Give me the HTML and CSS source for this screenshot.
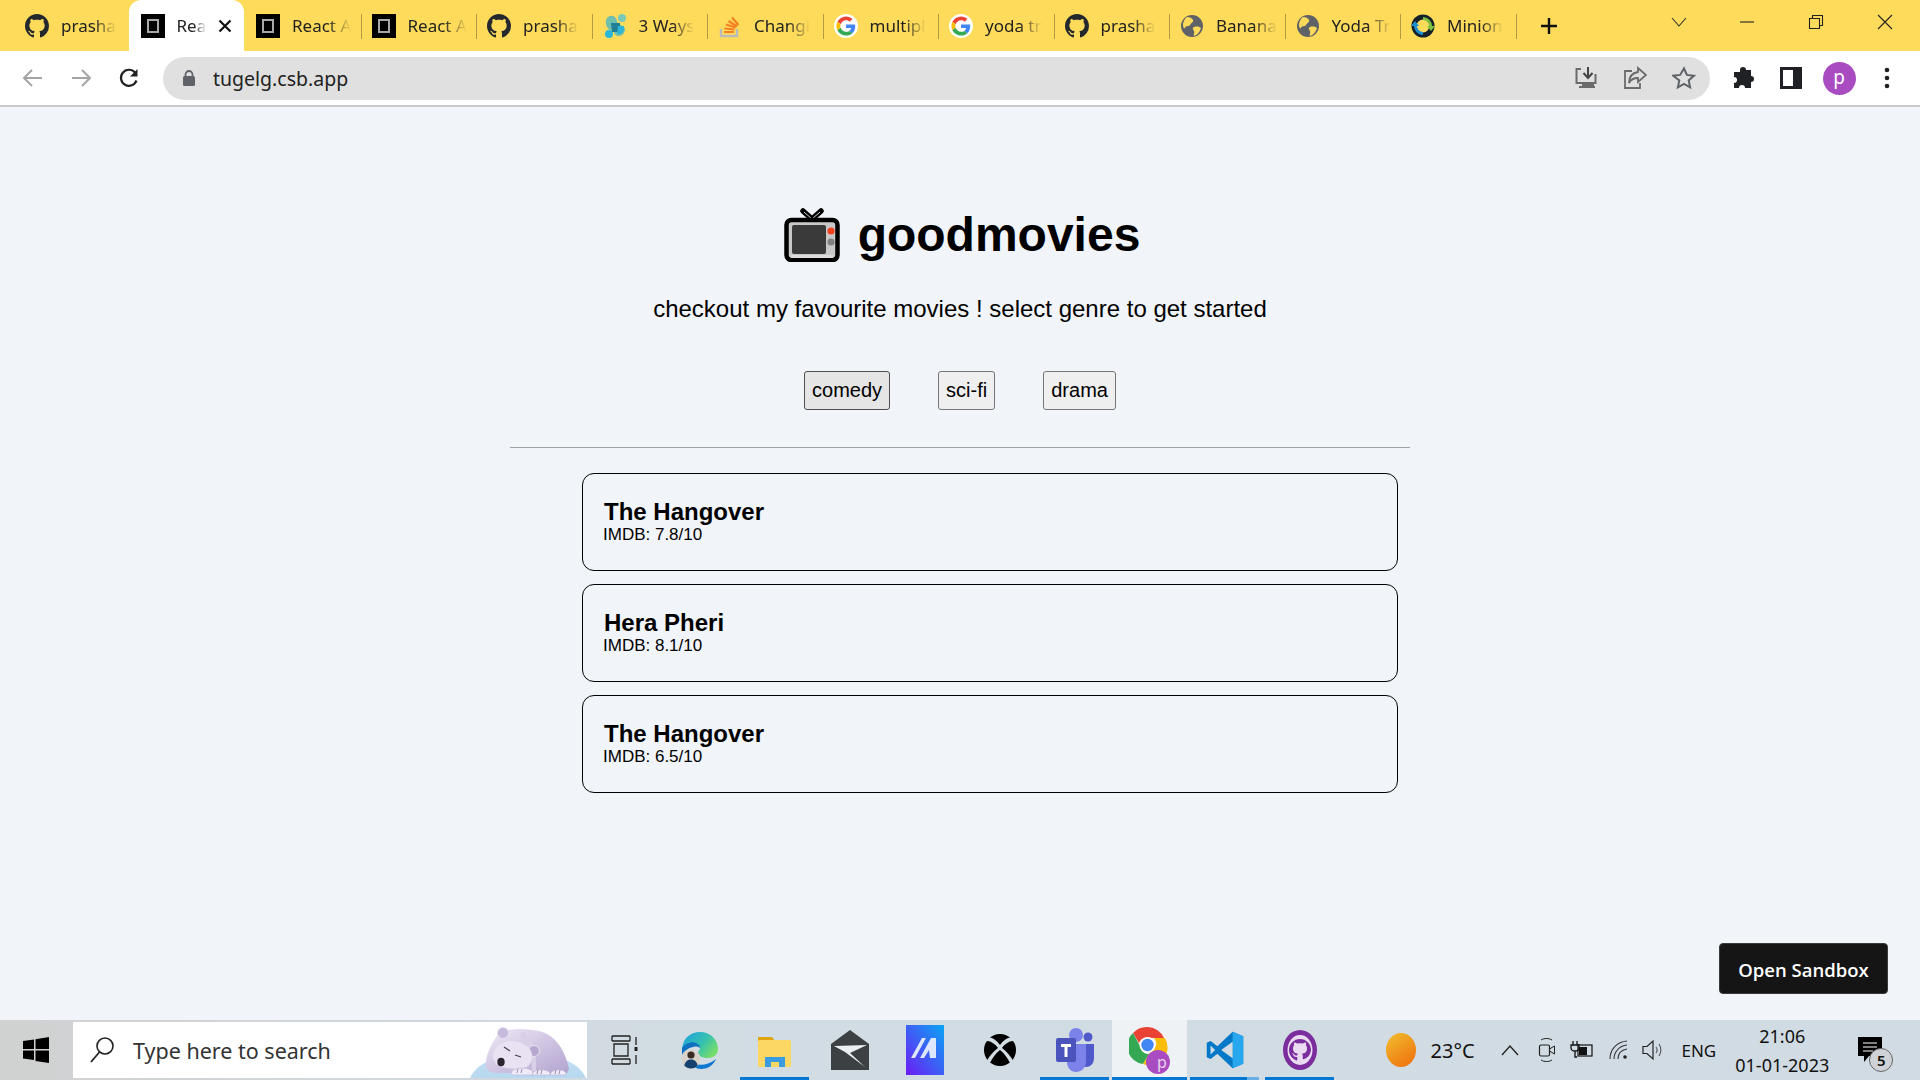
FILE: index.html
```html
<!DOCTYPE html>
<html lang="en">
<head>
    <meta charset="UTF-8">
    <title>goodmovies</title>
    <link rel="stylesheet" href="styles.css">
</head>
<body>
    <svg class="sprite" width="0" height="0">
        <symbol id="i-github" viewBox="0 0 16 16"><path d="M8 0C3.58 0 0 3.58 0 8c0 3.54 2.29 6.53 5.47 7.59.4.07.55-.17.55-.38 0-.19-.01-.82-.01-1.49-2.01.37-2.53-.49-2.69-.94-.09-.23-.48-.94-.82-1.13-.28-.15-.68-.52-.01-.53.63-.01 1.08.58 1.23.82.72 1.21 1.87.87 2.33.66.07-.52.28-.87.51-1.07-1.78-.2-3.64-.89-3.64-3.95 0-.87.31-1.59.82-2.15-.08-.2-.36-1.02.08-2.12 0 0 .67-.21 2.2.82.64-.18 1.32-.27 2-.27.68 0 1.36.09 2 .27 1.53-1.04 2.2-.82 2.2-.82.44 1.1.16 1.92.08 2.12.51.56.82 1.27.82 2.15 0 3.07-1.87 3.75-3.65 3.95.29.25.54.73.54 1.48 0 1.07-.01 1.93-.01 2.2 0 .21.15.46.55.38A8.013 8.013 0 0016 8c0-4.42-3.58-8-8-8z" fill="#24292e"/></symbol>
        <symbol id="i-box" viewBox="0 0 24 24"><rect width="24" height="24" fill="#000"/><rect x="7" y="6" width="10" height="12" fill="none" stroke="#a8a8a8" stroke-width="2"/></symbol>
        <symbol id="i-google" viewBox="-6 -6 60 60"><circle cx="24" cy="24" r="30" fill="#fff"/><path fill="#EA4335" d="M24 9.5c3.54 0 6.71 1.22 9.21 3.6l6.85-6.85C35.9 2.38 30.47 0 24 0 14.62 0 6.51 5.38 2.56 13.22l7.98 6.19C12.43 13.72 17.74 9.5 24 9.5z"/><path fill="#4285F4" d="M46.98 24.55c0-1.57-.15-3.09-.38-4.55H24v9.02h12.94c-.58 2.96-2.26 5.48-4.78 7.18l7.73 6c4.51-4.18 7.09-10.36 7.09-17.65z"/><path fill="#FBBC05" d="M10.53 28.59c-.48-1.45-.76-2.99-.76-4.59s.27-3.14.76-4.59l-7.98-6.19C.92 16.46 0 20.12 0 24c0 3.88.92 7.54 2.56 10.78l7.97-6.19z"/><path fill="#34A853" d="M24 48c6.48 0 11.93-2.13 15.89-5.81l-7.73-6c-2.15 1.45-4.92 2.3-8.16 2.3-6.26 0-11.57-4.22-13.47-9.91l-7.98 6.19C6.51 42.62 14.62 48 24 48z"/></symbol>
        <symbol id="i-globe" viewBox="0 0 24 24"><circle cx="12" cy="12" r="11" fill="#5f6368"/><path d="M7 3c3 0 5 1 6 3s-2 3-3 5-4 0-5 3c-1 1-2-1-2-3 0-3 2-7 4-8zM14 13c3-1 6 0 7 1-1 4-4 7-7 8-1-2 1-3 0-5s-2-3 0-4z" fill="#fdda59"/></symbol>
    </svg>

    <div class="tabbar">
        <div class="tabs">
            <div class="tab"><svg class="favicon"><use href="#i-github"/></svg><span class="tab-title">prasha</span></div>
            <div class="tab tab-active"><svg class="favicon"><use href="#i-box"/></svg><span class="tab-title">Rea</span><svg class="tab-close" width="14" height="14" viewBox="0 0 14 14"><path d="M1.500 1.500l11 11M12.500 1.500l-11 11" stroke="#111" stroke-width="2.200"/></svg></div>
            <div class="tab"><svg class="favicon"><use href="#i-box"/></svg><span class="tab-title">React A</span></div>
            <div class="tab"><svg class="favicon"><use href="#i-box"/></svg><span class="tab-title">React A</span></div>
            <div class="tab"><svg class="favicon"><use href="#i-github"/></svg><span class="tab-title">prasha</span></div>
            <div class="tab">
                <svg class="favicon" viewBox="0 0 24 24"><circle cx="6" cy="20" r="4" fill="#29b6d8"/><circle cx="19" cy="4" r="4" fill="#7cc9bb"/><path d="M4 4c4-4 9-2 10 3s4 3 7 6-1 10-6 9-3-6-7-6-7-8-4-12z" fill="#6fbfae"/><path d="M8 9h9v9H9z" fill="#1f7f96"/><path d="M15 12h6c1 5-3 9-7 8z" fill="#2bb5d6"/></svg><span class="tab-title">3 Ways</span>
            </div>
            <div class="tab">
                <svg class="favicon" viewBox="0 0 24 24"><path d="M3 15v7h16v-7" fill="none" stroke="#bcbbbb" stroke-width="2.4"/><path d="M6 18h10M6.500 14.500l10 1M8 10.500l9.500 3M10.500 7l8.500 5.500M14 3.500l6.500 7.500" stroke="#f48024" stroke-width="2.2" fill="none"/></svg><span class="tab-title">Changi</span>
            </div>
            <div class="tab"><svg class="favicon"><use href="#i-google"/></svg><span class="tab-title">multipl</span></div>
            <div class="tab"><svg class="favicon"><use href="#i-google"/></svg><span class="tab-title">yoda tr</span></div>
            <div class="tab"><svg class="favicon"><use href="#i-github"/></svg><span class="tab-title">prasha</span></div>
            <div class="tab"><svg class="favicon"><use href="#i-globe"/></svg><span class="tab-title">Banana</span></div>
            <div class="tab"><svg class="favicon"><use href="#i-globe"/></svg><span class="tab-title">Yoda Tr</span></div>
            <div class="tab">
                <svg class="favicon" viewBox="0 0 24 24"><circle cx="12" cy="12" r="9" fill="none" stroke="#14202a" stroke-width="5"/><path d="M12 3a9 9 0 0 1 9 9h3l-4 5-4-5h2a6 6 0 0 0-6-6z" fill="#7cc142"/><path d="M12 21a9 9 0 0 1-9-9H0l4-5 4 5H6a6 6 0 0 0 6 6z" fill="#1c8fd0"/></svg><span class="tab-title">Minion</span>
            </div>
        </div>
        <svg class="new-tab" width="22" height="22" viewBox="0 0 22 22"><path d="M11 3v16M3 11h16" stroke="#111" stroke-width="2.4"/></svg>
        <svg class="tab-search" width="18" height="12" viewBox="0 0 18 12"><path d="M2 2l7 8 7-8" fill="none" stroke="#333" stroke-width="1.1"/></svg>
        <div class="win-btn"><svg width="16" height="16" viewBox="0 0 16 16"><path d="M1 8h14" stroke="#222" stroke-width="1.1"/></svg></div>
        <div class="win-btn"><svg width="16" height="16" viewBox="0 0 16 16"><path d="M1.500 4.500h10v10h-10zM4.500 4.500v-3h10v10h-3" fill="none" stroke="#222" stroke-width="1.1"/></svg></div>
        <div class="win-btn"><svg width="18" height="18" viewBox="0 0 18 18"><path d="M2 2l14 14M16 2L2 16" stroke="#222" stroke-width="1.1"/></svg></div>
    </div>

    <div class="toolbar">
        <div class="nav-btn"><svg width="22" height="22" viewBox="0 0 22 22"><path d="M20 11H3M10 3l-8 8 8 8" fill="none" stroke="#a4a4a4" stroke-width="2"/></svg></div>
        <div class="nav-btn"><svg width="22" height="22" viewBox="0 0 22 22"><path d="M2 11h17M12 3l8 8-8 8" fill="none" stroke="#a4a4a4" stroke-width="2"/></svg></div>
        <div class="nav-btn"><svg width="22" height="22" viewBox="0 0 22 22"><path d="M18.500 13.500A8 8 0 1 1 17 5.500" fill="none" stroke="#222" stroke-width="2.200"/><path d="M19.500 2v7.500H12z" fill="#222"/></svg></div>
        <div class="omnibox">
            <svg width="14" height="18" viewBox="0 0 14 18"><path d="M3.500 8V5.500a3.500 3.500 0 0 1 7 0V8" fill="none" stroke="#5f6368" stroke-width="1.800"/><rect x="1" y="7" width="12" height="10" rx="1.500" fill="#5f6368"/></svg>
            <span class="url">tugelg.csb.app</span>
            <div class="omni-actions">
                <svg width="24" height="24" viewBox="0 0 24 24"><path d="M7 3H2.500v14h19V8" fill="none" stroke="#6b6b6b" stroke-width="2"/><path d="M14 1v10M9.500 7l4.500 5 4.500-5" fill="none" stroke="#444" stroke-width="2"/><path d="M8 17h12v3H8zM5 20h16v2H5z" fill="#6b6b6b"/></svg>
                <svg width="24" height="24" viewBox="0 0 24 24"><path d="M9 5H2v17h15v-5" fill="none" stroke="#6b6b6b" stroke-width="1.800"/><path d="M15 2l8 7-8 7v-4c-4 0-7 1-9 5 0-6 3-10 9-11z" fill="none" stroke="#6b6b6b" stroke-width="1.800"/></svg>
                <svg width="24" height="24" viewBox="0 0 24 24"><path d="M12 2.500l2.900 6.400 7 .8-5.200 4.700 1.400 6.900-6.100-3.500-6.100 3.500 1.400-6.900L1.100 9.700l7-.8z" fill="none" stroke="#5f6368" stroke-width="2"/></svg>
            </div>
        </div>
        <div class="nav-btn"><svg width="24" height="24" viewBox="0 0 24 24"><path d="M9 4a3 3 0 0 1 6 0h5v6a3 3 0 0 1 0 6v6h-6a3 3 0 0 0-6 0H3v-5a3 3 0 0 0 0-6V6h6z" fill="#202124"/></svg></div>
        <div class="nav-btn"><svg width="22" height="24" viewBox="0 0 22 24"><rect x="1.500" y="2.500" width="19" height="19" fill="none" stroke="#202124" stroke-width="3"/><rect x="13" y="2.500" width="7" height="19" fill="#202124"/></svg></div>
        <div class="nav-btn"><span class="avatar">p</span></div>
        <div class="nav-btn"><svg width="6" height="22" viewBox="0 0 6 22"><circle cx="3" cy="3" r="2.300" fill="#202124"/><circle cx="3" cy="11" r="2.300" fill="#202124"/><circle cx="3" cy="19" r="2.300" fill="#202124"/></svg></div>
    </div>

    <main class="page">
        <div class="container">
            <h1 class="brand">
                <svg class="brand-icon" viewBox="0 0 56 54">
                    <path d="M19 3l9 8 9-8" fill="none" stroke="#000" stroke-width="5.500" stroke-linecap="round" stroke-linejoin="round"/>
                    <path d="M20 4l8 7 8-7" fill="none" stroke="#d9d9d9" stroke-width="1"/>
                    <rect x="2.500" y="12" width="51" height="40" rx="5" fill="#c8c8c8" stroke="#000" stroke-width="4.500"/>
                    <rect x="7" y="47" width="42" height="3" fill="#dcdcdc"/>
                    <rect x="8" y="17" width="34" height="29" rx="2" fill="#3a3a3a"/>
                    <circle cx="47" cy="23" r="3.600" fill="#f4411f"/>
                    <circle cx="47" cy="34" r="3.600" fill="#808080"/>
                </svg>
                goodmovies
            </h1>
            <p class="tagline">checkout my favourite movies ! select genre to get started</p>
            <div class="genres">
                <button class="genre genre-hover">comedy</button>
                <button class="genre">sci-fi</button>
                <button class="genre">drama</button>
            </div>
            <hr class="divider">
            <ul class="movies">
                <li class="movie">
                    <div class="movie-name">The Hangover</div>
                    <div class="movie-rating">IMDB: 7.8/10</div>
                </li>
                <li class="movie">
                    <div class="movie-name">Hera Pheri</div>
                    <div class="movie-rating">IMDB: 8.1/10</div>
                </li>
                <li class="movie">
                    <div class="movie-name">The Hangover</div>
                    <div class="movie-rating">IMDB: 6.5/10</div>
                </li>
            </ul>
        </div>
        <a class="open-sandbox">Open Sandbox</a>
    </main>

    <div class="taskbar">
        <div class="start"><svg width="26" height="26" viewBox="0 0 26 26"><path d="M0 4l11-1.500V12H0zM12.500 2.200L26 0v12H12.500zM0 13.500h11V23L0 21.500zM12.500 13.500H26V26l-13.500-2z" fill="#000"/></svg></div>
        <div class="search">
            <svg width="26" height="28" viewBox="0 0 26 28"><circle cx="16" cy="10" r="8" fill="none" stroke="#222" stroke-width="1.600"/><path d="M10.500 16L2 26" stroke="#222" stroke-width="1.800"/></svg>
            <span class="search-text">Type here to search</span>
            <svg class="bear" width="118" height="58" viewBox="0 0 118 58">
                <defs>
                    <linearGradient id="bear-mound" x1="0" y1="0" x2="0" y2="1"><stop offset="0" stop-color="#c4dff2"/><stop offset="1" stop-color="#a5cfec"/></linearGradient>
                    <linearGradient id="bear-fur" x1="0" y1="0" x2="1" y2="1"><stop offset="0" stop-color="#efe9f6"/><stop offset="1" stop-color="#b3a3cf"/></linearGradient>
                </defs>
                <ellipse cx="59" cy="64" rx="59" ry="31" fill="url(#bear-mound)"/>
                <path d="M17 46C16 36 22 24 30 13c10-5 26-5 40-2 16 4 26 18 30 38l-2 4H26c-5-1-9-3-9-7z" fill="url(#bear-fur)"/>
                <path d="M54 11c10 8 14 22 13 40h-4c0-14-4-26-12-36z" fill="#d9d0e8"/>
                <circle cx="34" cy="13" r="5.500" fill="#c6b9dc" stroke="#e6e0f0"/>
                <circle cx="65" cy="31" r="5.500" fill="#b7a8d0" stroke="#e6e0f0"/>
                <path d="M24 34c4-14 24-18 36-6 5 6 4 14-2 19-10 3-24 2-31-3-2-3-4-6-3-10z" fill="#e8e2f2"/>
                <ellipse cx="32" cy="42" rx="3.700" ry="4.200" fill="#2c2530"/>
                <path d="M35 27l6 4M46 35l6 2" stroke="#4d4155" stroke-width="1.300" fill="none"/>
                <path d="M42 54c0-7 18-8 22-2l-1 3H44zM63 55c0-6 15-7 18-2v2zM81 55c1-6 13-7 16-2v2z" fill="#f0ecf7" stroke="#bdb0d2" stroke-width=".6"/>
                <path d="M49 49l-1 4M53 49l-1 4M69 50l-1 4M73 50l-1 4M87 50l-1 4M91 50l-1 4" stroke="#8d7fa8" stroke-width=".9"/>
            </svg>
        </div>
        <div class="task-icon task-view"><svg width="30" height="30" viewBox="0 0 30 30"><path d="M3 1h18M3 6h18M5 9h14v12H5zM3 24h18M3 29h18M3 24v5M21 24v5M3 1v5M21 1v5" fill="none" stroke="#222" stroke-width="1.300"/><path d="M27 2v8M27 20v9" stroke="#222" stroke-width="1.300"/><rect x="25.500" y="12" width="3" height="4" fill="#222"/></svg></div>
        <div class="task-icon">
            <svg width="38" height="38" viewBox="0 0 38 38">
                <defs>
                    <linearGradient id="edge" x1="0" y1="0" x2="1" y2=".6"><stop offset="0" stop-color="#1d9fe0"/><stop offset=".6" stop-color="#35c1b1"/><stop offset="1" stop-color="#74dc6a"/></linearGradient>
                    <clipPath id="edge-face"><circle cx="10" cy="28" r="9.500"/></clipPath>
                </defs>
                <path d="M1 17C3 6 10 1 19 1c11 0 18 8 18 17 0 6-5 9-10 9-5 0-10-2-10-5 0-2 2-2 2-5 0-3-4-5-8-4-5 1-8 3-10 4z" fill="url(#edge)"/>
                <path d="M1 17c3-4 9-7 14-5 3 1 4 3 4 5-1-1-4-2-7-1-5 1-9 4-11 8z" fill="#0f6fc0"/>
                <path d="M14 33c7 2 15 0 21-5-3 7-9 10-15 10-3 0-5-1-6-2z" fill="#0f78d0"/>
                <circle cx="10" cy="28" r="9.500" fill="#d8d4cc"/>
                <g clip-path="url(#edge-face)">
                    <circle cx="10" cy="24" r="3.600" fill="#3b2a22"/>
                    <path d="M3 38c0-7 3-9.500 7-9.500s7 2.500 7 9.500z" fill="#16406f"/>
                </g>
            </svg>
        </div>
        <div class="task-icon task-running">
            <svg width="34" height="34" viewBox="0 0 34 34"><path d="M0 4h14l3 4h-17z" fill="#e0a40e"/><rect y="7" width="33" height="27" rx="1.500" fill="#fdd764"/><path d="M7 34V24h20v10h-6v-5h-8v5z" fill="#3a9be0"/></svg>
        </div>
        <div class="task-icon">
            <svg width="38" height="40" viewBox="0 0 38 40"><path d="M0 14L19 0l19 14v26H0z" fill="#3c4043"/><path d="M3 16l33-1-17 8 15 14-20-15z" fill="#eceff1"/></svg>
        </div>
        <div class="task-icon">
            <svg width="38" height="50" viewBox="0 0 38 50"><defs><linearGradient id="mail" x1="1" y1="0" x2="0" y2="1"><stop offset="0" stop-color="#0aa5f5"/><stop offset="1" stop-color="#6d1cf5"/></linearGradient></defs><rect width="38" height="50" fill="url(#mail)"/><path d="M5 33L16 13h4L9 33zM14 33L25 13h5v20h-6l-1-8-5 8z" fill="#dce6ff"/></svg>
        </div>
        <div class="task-icon">
            <svg width="32" height="32" viewBox="0 0 32 32"><circle cx="16" cy="16" r="16" fill="#000"/><path d="M3 3c6 0 10 4 13 8 3-4 7-8 13-8l3 5-4-1c-5 1-9 5-10 7 4 3 10 9 12 15l-3 2C24 24 19 18 16 16 13 18 8 24 5 31l-3-2c2-6 8-12 12-15-1-2-5-6-10-7L0 8z" fill="#d2dce3"/></svg>
        </div>
        <div class="task-icon task-running">
            <svg width="38" height="46" viewBox="0 0 38 46"><circle cx="20" cy="8" r="7" fill="#7b83eb"/><circle cx="32" cy="10" r="4.500" fill="#5059c9"/><path d="M22 17h16v14c0 6-4 9-8 9-5 0-8-3-8-8z" fill="#5059c9"/><path d="M11 17h19v18c0 6-5 10-10 10-5 0-9-4-9-10z" fill="#7b83eb"/><rect y="11" width="20" height="24" rx="2" fill="#4b53bc"/><path d="M5 17h10v3h-3.500v10h-3V20H5z" fill="#fff"/></svg>
        </div>
        <div class="task-icon task-running task-active">
            <svg width="42" height="50" viewBox="0 0 42 50"><path d="M18 2a18 18 0 0 1 17 11H18a8 8 0 0 0-8 5L4 8a18 18 0 0 1 14-6z" fill="#ea4335"/><path d="M4 8l8 15a8 8 0 0 0 8 6l-6 10A18 18 0 0 1 4 8z" fill="#34a853"/><path d="M36 13a18 18 0 0 1-22 26l8-13a8 8 0 0 0 3-13z" fill="#fbbc05"/><circle cx="18.500" cy="20" r="8" fill="#fff"/><circle cx="18.500" cy="20" r="6.200" fill="#4285f4"/><circle cx="29" cy="37" r="12" fill="#a94cc1"/></svg>
            <span class="chrome-p">p</span>
        </div>
        <div class="task-icon task-running task-split">
            <svg width="38" height="38" viewBox="0 0 100 100"><path d="M70 2L30 40 12 26l-10 5v38l10 5 18-14 40 38 28-12V14z" fill="#0078c8"/><path d="M70 2l28 12v72L70 98z" fill="#27a8ee"/><path d="M70 28L40 50l30 22z" fill="#d2dce4"/><path d="M12 38v24l12-12z" fill="#d2dce4"/></svg>
        </div>
        <div class="task-icon task-running">
            <svg width="36" height="40" viewBox="0 0 36 40"><ellipse cx="18" cy="20" rx="17" ry="20" fill="#7b2d9e"/><ellipse cx="18" cy="20" rx="12.500" ry="15" fill="#eadbf2"/><svg x="7" y="9" width="22" height="22" viewBox="0 0 16 16"><path d="M8 0C3.580 0 0 3.580 0 8c0 3.540 2.290 6.530 5.470 7.590.4.070.550-.17.550-.38v-2.200c-2.230.480-2.700-1.070-2.700-1.070-.36-.93-.89-1.170-.89-1.170-.73-.5.060-.49.060-.49.800.060 1.230.830 1.230.830.710 1.220 1.870.870 2.330.660.070-.52.280-.87.510-1.070-1.780-.2-3.640-.89-3.640-3.950 0-.87.310-1.590.820-2.150-.08-.2-.36-1.020.080-2.120 0 0 .670-.21 2.200.820a7.600 7.600 0 0 1 4 0c1.530-1.040 2.200-.82 2.200-.82.440 1.100.160 1.920.080 2.120.510.560.820 1.270.820 2.150 0 3.070-1.870 3.750-3.650 3.950.29.250.540.730.540 1.480v2.200c0 .210.150.460.550.380A8 8 0 0 0 16 8c0-4.420-3.580-8-8-8z" fill="#7b2d9e"/></svg></svg>
        </div>

        <div class="tray">
            <span class="weather-sun"></span>
            <span class="weather-temp">23°C</span>
            <svg class="tray-caret" width="18" height="12" viewBox="0 0 18 12"><path d="M1 11l8-9 8 9" fill="none" stroke="#222" stroke-width="1.300"/></svg>
            <svg class="tray-ico tray-cam" width="18" height="26" viewBox="0 0 18 26"><rect x="1.500" y="8" width="10" height="11" rx="1.500" fill="none" stroke="#222" stroke-width="1.200"/><path d="M11.500 12l5-3v8l-5-3M3 3c3-2 8-2 11 0M3 23c3 2 8 2 11 0" fill="none" stroke="#222" stroke-width="1"/></svg>
            <svg class="tray-ico" width="24" height="20" viewBox="0 0 24 20"><path d="M4 1v4M8 1v4M2 5h8v3c0 2-2 3-4 3s-4-1-4-3zM6 11v6h2" fill="none" stroke="#111" stroke-width="1.300"/><rect x="9" y="5" width="14" height="11" fill="none" stroke="#111" stroke-width="1.200"/><rect x="10" y="7" width="8" height="8" fill="#111"/></svg>
            <svg class="tray-ico tray-wifi" width="20" height="20" viewBox="0 0 20 20"><path d="M1 19C1 9 8 2 18 1M5 19c0-7 5-13 13-14M9 19c0-5 3-9 9-10" fill="none" stroke="#333" stroke-width="1.100"/><circle cx="16" cy="17" r="1.800" fill="#222"/></svg>
            <svg class="tray-ico" width="22" height="22" viewBox="0 0 22 22"><path d="M1 7.500h4L11 2v18l-6-5.500H1z" fill="none" stroke="#222" stroke-width="1.200"/><path d="M14 8c1.500 2 1.500 4 0 6M17 5c2.500 3.500 2.500 8.500 0 12" fill="none" stroke="#555" stroke-width="1.100"/></svg>
            <span class="tray-lang">ENG</span>
            <div class="clock"><span>21:06</span><span>01-01-2023</span></div>
            <div class="notify">
                <svg width="26" height="28" viewBox="0 0 26 28"><path d="M1 1h24v19H12l-5 6v-6H1z" fill="#000"/><path d="M6 7h14M6 11h14M6 15h10" stroke="#fff" stroke-width="1.200"/></svg>
                <span class="notify-count">5</span>
            </div>
        </div>
    </div>
</body>
</html>
```

FILE: styles.css
```css
* {
    box-sizing: border-box;
}
html, body {
    height: 100%;
}
body {
    margin: 0;
    display: flex;
    flex-direction: column;
    height: 1080px;
    overflow: hidden;
    background-color: #f1f4f9;
    font-family: "Liberation Sans", Arial, sans-serif;
    color: #000;
}
.sprite {
    display: block;
    height: 0;
}

/* tab strip */
.tabbar {
    flex: none;
    height: 51px;
    display: flex;
    align-items: center;
    background-color: #fedb5a;
    padding-left: 13px;
    font-family: "Noto Sans", sans-serif;
}
.tabs {
    display: flex;
    align-self: stretch;
    width: 1503px;
}
.tab {
    position: relative;
    width: 115.5px;
    flex: none;
    display: flex;
    align-items: center;
    padding-left: 12px;
    gap: 12px;
    font-size: 17px;
    color: #222;
}
.tab::after {
    content: "";
    position: absolute;
    right: -2px;
    top: 14px;
    height: 25px;
    width: 1px;
    background-color: #b09a45;
}
.tab:first-child::after,
.tab-active::after {
    display: none;
}
.tab-active {
    background-color: #fff;
    border-radius: 12px 12px 0 0;
}
.favicon {
    width: 24px;
    height: 24px;
    flex: none;
}
.tab-title {
    white-space: nowrap;
    -webkit-mask-image: linear-gradient(to right, #000 60%, transparent);
    mask-image: linear-gradient(to right, #000 60%, transparent);
}
.tab-close {
    margin-left: auto;
    margin-right: 16px;
    flex: none;
}
.new-tab {
    margin-left: 22px;
    flex: none;
}
.tab-search {
    margin-left: auto;
    margin-right: 24px;
    margin-bottom: 8px;
    flex: none;
}
.win-btn {
    width: 69.3px;
    flex: none;
    display: flex;
    justify-content: center;
    margin-bottom: 8px;
}

/* address bar */
.toolbar {
    flex: none;
    height: 56px;
    padding: 0 9px;
    display: flex;
    align-items: center;
    background-color: #fff;
    border-bottom: 2px solid #c9cacc;
}
.nav-btn {
    width: 48px;
    flex: none;
    display: flex;
    justify-content: center;
    align-items: center;
}
.omnibox {
    width: 1547px;
    height: 43px;
    margin: 0 9px 0 10px;
    padding: 0 14px 0 19px;
    display: flex;
    align-items: center;
    gap: 17px;
    background-color: #e0e0e0;
    border-radius: 22px;
    flex: none;
}
.url {
    font-family: "Noto Sans", sans-serif;
    font-size: 19.5px;
    color: #222;
}
.omni-actions {
    margin-left: auto;
    display: flex;
    gap: 25px;
}
.avatar {
    width: 33px;
    height: 33px;
    border-radius: 50%;
    background-color: #a94cc1;
    color: #fff;
    display: flex;
    justify-content: center;
    align-items: center;
    font-family: "Noto Sans", sans-serif;
    font-size: 19px;
    padding-bottom: 3px;
}

/* page */
.page {
    flex: 1;
    position: relative;
    min-height: 0;
}
.container {
    width: 900px;
    margin: 0 auto;
    text-align: center;
}
.brand {
    margin: 0;
    padding: 100px 0 0 4px;
    display: flex;
    justify-content: center;
    align-items: center;
    gap: 18px;
    font-size: 48px;
    line-height: 56px;
    font-weight: bold;
}
.brand-icon {
    width: 56px;
    height: 54px;
    flex: none;
}
.tagline {
    margin: 32px 0 0;
    font-size: 24px;
    line-height: 28px;
}
.genres {
    margin-top: 48px;
    display: flex;
    justify-content: center;
    gap: 48px;
}
.genre {
    height: 39px;
    padding: 0 7px;
    font-family: "Liberation Sans", Arial, sans-serif;
    font-size: 20px;
    color: #000;
    background-color: #efefef;
    border: 1px solid #767676;
    border-radius: 3px;
}
.genre-hover {
    background-color: #e5e5e5;
    border-color: #4f4f4f;
}
.divider {
    margin: 37px 0 0;
    border: none;
    border-top: 1px solid #a0a0a0;
    height: 1px;
}
.movies {
    list-style: none;
    margin: 25px 0 0;
    padding: 0 12px 0 72px;
    display: flex;
    flex-direction: column;
    gap: 13px;
    text-align: left;
}
.movie {
    height: 98px;
    padding: 24px 20px 0 20px;
    border: 1px solid #000;
    border-radius: 12px;
}
.movie-name {
    padding-left: 1px;
    font-size: 24px;
    line-height: 28px;
    font-weight: bold;
}
.movie-rating {
    font-size: 17px;
    line-height: 18px;
}
.open-sandbox {
    position: absolute;
    left: 1719px;
    top: 836px;
    width: 169px;
    height: 51px;
    padding-top: 1px;
    display: flex;
    justify-content: center;
    align-items: center;
    background-color: #151515;
    border: 1px solid #3a3a3a;
    border-radius: 4px;
    color: #fff;
    font-family: "Open Sans", sans-serif;
    font-size: 18.5px;
    font-weight: 600;
}

/* windows taskbar */
.taskbar {
    flex: none;
    height: 60px;
    display: flex;
    align-items: center;
    background: linear-gradient(to right, #d0d1d1, #d2dce3 35%, #d0dbe3);
    font-family: "Noto Sans", sans-serif;
    color: #111;
}
.start {
    width: 73px;
    padding-right: 2px;
    flex: none;
    display: flex;
    justify-content: center;
}
.search {
    width: 514px;
    height: 56px;
    flex: none;
    position: relative;
    overflow: hidden;
    display: flex;
    align-items: center;
    gap: 18px;
    padding-left: 16px;
    background-color: #fff;
}
.search-text {
    font-size: 21.5px;
    color: #333;
}
.bear {
    position: absolute;
    right: 0;
    bottom: 0;
}
.task-icon {
    width: 75px;
    height: 60px;
    flex: none;
    display: flex;
    justify-content: center;
    align-items: center;
    position: relative;
}
.task-view {
    width: 73px;
    margin-right: 2px;
}
.task-running::after {
    content: "";
    position: absolute;
    left: 3px;
    right: 3px;
    bottom: 0;
    height: 3px;
    background-color: #0078d4;
}
.task-active {
    background-color: #eff2f5;
}
.task-active::after {
    left: 0;
    right: 0;
}
.task-split::before {
    content: "";
    position: absolute;
    right: 3px;
    bottom: 0;
    width: 12px;
    height: 3px;
    background-color: #6aafe6;
    z-index: 1;
}
.chrome-p {
    position: absolute;
    left: 45px;
    top: 31px;
    font-size: 16px;
    color: #e8d4ee;
}
.tray {
    flex: 1;
    display: flex;
    align-items: center;
    height: 100%;
    position: relative;
}
.weather-sun {
    width: 30px;
    height: 34px;
    margin-left: 48.5px;
    border-radius: 50%;
    background: linear-gradient(145deg, #f0c02e, #f06a0c);
    flex: none;
}
.weather-temp {
    margin-left: 15px;
    font-size: 20px;
    width: 66px;
    flex: none;
}
.tray-caret {
    margin-left: 4px;
    flex: none;
}
.tray-ico {
    margin-left: 13px;
    flex: none;
}
.tray-cam {
    margin-left: 19px;
}
.tray-wifi {
    margin-left: 16px;
}
.tray-lang {
    margin-left: 18px;
    font-size: 17px;
    flex: none;
}
.clock {
    margin-left: 18px;
    width: 96px;
    flex: none;
    display: flex;
    flex-direction: column;
    align-items: center;
    gap: 5px;
    font-size: 18px;
    line-height: 24px;
    white-space: nowrap;
}
.notify {
    position: relative;
    margin-left: 27px;
    flex: none;
    display: flex;
}
.notify-count {
    position: absolute;
    left: 12px;
    top: 12px;
    width: 24px;
    height: 24px;
    border-radius: 50%;
    background-color: #cfd3d7;
    border: 1px solid #666;
    display: flex;
    justify-content: center;
    align-items: center;
    font-size: 15px;
    font-weight: 600;
}
```
